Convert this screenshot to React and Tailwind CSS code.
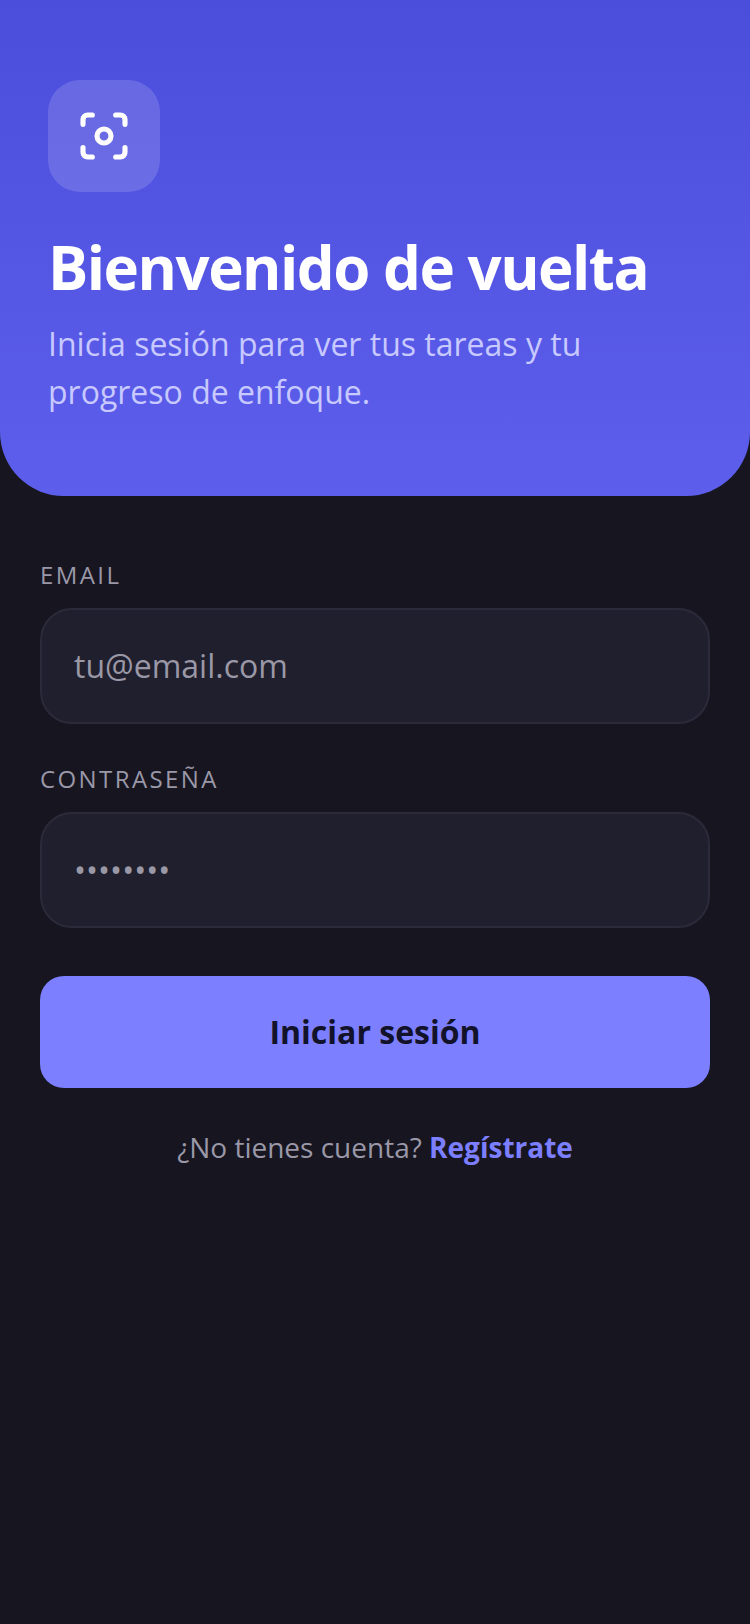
import React, { useState } from 'react';
import { Focus } from 'lucide-react';

const Field = ({ id, label, ...props }) => (
  <div className="flex flex-col gap-[18px]">
    <label htmlFor={id} className="text-2xl leading-[30px] tracking-widest uppercase text-[#9a98a8]">
      {label}
    </label>
    <input
      id={id}
      className="w-full h-[116px] px-8 pb-0.5 rounded-[32px] border-2 border-[#2c2a3a] bg-[#201f2d] text-[32px] text-white placeholder:text-[#9a98a6] outline-none focus:border-[#7c7fff]"
      {...props}
    />
  </div>
);

const App = () => {
  const [email, setEmail] = useState('');
  const [password, setPassword] = useState('');

  const handleSubmit = (e) => {
    e.preventDefault();
  };

  return (
    <div className="min-h-screen bg-[#17151f] font-['Open_Sans',sans-serif]">
      <header className="px-12 pt-20 pb-20 rounded-b-[64px] bg-linear-to-b from-[#4b4ddb] to-[#5d5fec]">
        <div className="flex items-center justify-center size-28 rounded-[32px] bg-white/15">
          <Focus className="size-14 text-white" strokeWidth={2.2} />
        </div>
        <h1 className="mt-10 text-[60px] leading-[70px] font-bold tracking-tight text-white">
          Bienvenido de vuelta
        </h1>
        <p className="mt-[18px] max-w-[560px] text-[32px] leading-[48px] text-[#c7c9ff]">
          Inicia sesión para ver tus tareas y tu progreso de enfoque.
        </p>
      </header>

      <main className="px-10 pt-16 pb-10">
        <form onSubmit={handleSubmit} className="flex flex-col gap-10">
          <Field
            id="email"
            label="Email"
            type="email"
            placeholder="tu@email.com"
            value={email}
            onChange={(e) => setEmail(e.target.value)}
          />
          <Field
            id="password"
            label="Contraseña"
            type="password"
            placeholder="••••••••"
            value={password}
            onChange={(e) => setPassword(e.target.value)}
          />
          <button
            type="submit"
            className="mt-2 h-28 w-full rounded-3xl bg-[#7c7fff] text-[32px] font-bold text-[#12122a] cursor-pointer"
          >
            Iniciar sesión
          </button>
        </form>
        <p className="mt-10 text-center text-[28px] leading-[38px] text-[#9a98a8]">
          ¿No tienes cuenta?{' '}
          <a href="#registro" className="font-bold text-[#7c7fff]">
            Regístrate
          </a>
        </p>
      </main>
    </div>
  );
};

export default App;
